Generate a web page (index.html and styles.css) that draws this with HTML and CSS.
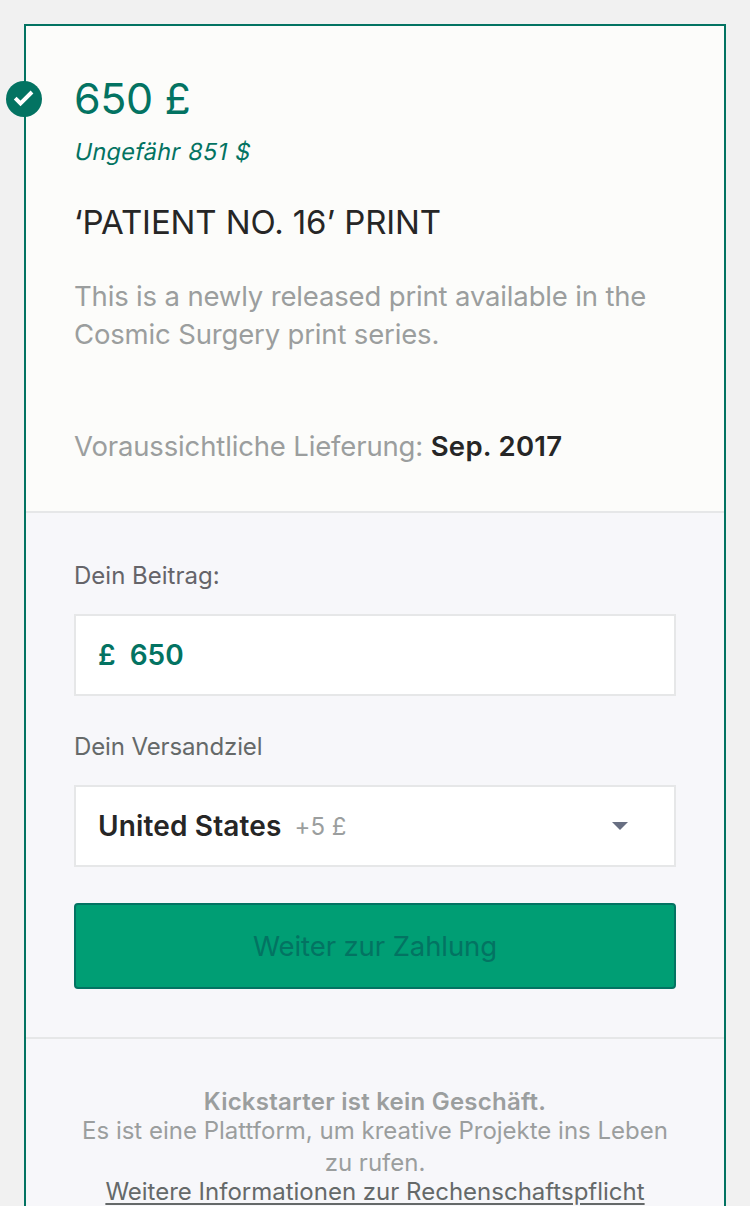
FILE: index.html
```html
<!DOCTYPE html>
<html lang="de">
<head>
<meta charset="utf-8">
<title>Kickstarter</title>
<link rel="stylesheet" href="styles.css">
</head>
<body>
<main class="card">
  <section class="reward">
    <svg class="check" viewBox="0 0 36 36"><circle cx="18" cy="18" r="18" fill="#037362"/><path d="M9.200 17.200l5.300 5.300L26 11" fill="none" stroke="#fff" stroke-width="3.900"/></svg>
    <h1 class="amount">650 £</h1>
    <p class="approx"><span class="slanted">Ungefähr 851 $</span></p>
    <h2 class="title">‘PATIENT NO. 16’ PRINT</h2>
    <p class="description">This is a newly released print available in the<br>Cosmic Surgery print series.</p>
    <p class="delivery">Voraussichtliche Lieferung: <strong class="date">Sep. 2017</strong></p>
  </section>
  <form class="pledge">
    <label class="label contribution">Dein Beitrag:</label>
    <div class="field money"><span>£</span><span>650</span></div>
    <label class="label destination">Dein Versandziel</label>
    <div class="field select"><span class="country">United States</span><span class="fee">+5 £</span><svg class="caret" viewBox="0 0 16 8"><path d="M0 0h16L8 8z" fill="#686f82"/></svg></div>
    <button class="submit" type="button">Weiter zur Zahlung</button>
  </form>
  <footer class="note">
    <strong class="headline">Kickstarter ist kein Geschäft.</strong>
    <span class="explanation">Es ist eine Plattform, um kreative Projekte ins Leben<br>zu rufen.</span>
    <a class="more">Weitere Informationen zur Rechenschaftspflicht</a>
  </footer>
</main>
</body>
</html>
```
FILE: styles.css
```css
* { box-sizing: border-box; }
body { margin: 0; padding: 24px 24px 0; height: 1206px; overflow: hidden; background: #f1f1f1; font-family: Inter, "Liberation Sans", sans-serif; font-variant-ligatures: none; }
h1, h2, p { margin: 0; font-weight: 400; }
strong { font-weight: 600; }
.card { height: 1230px; border: 2px solid #037362; background: #f7f7fa; }
.reward { position: relative; height: 487px; padding: 46px 48px 0; background: #fcfcfa; border-bottom: 2px solid #e6e7e8; }
.check { position: absolute; left: -20px; top: 55px; width: 36px; height: 36px; }
.amount { height: 54px; line-height: 52px; font-size: 43px; letter-spacing: -0.4px; color: #037362; }
.approx { height: 51px; line-height: 52px; font-size: 23.500px; color: #037362; }
.slanted { display: inline-block; margin-left: 1px; transform: skewX(-11deg); letter-spacing: 0.25px; word-spacing: 1px; white-space: nowrap; }
.title { height: 90px; line-height: 90px; font-size: 33px; color: #262626; white-space: nowrap; letter-spacing: -0.1px; }
.description { margin-top: 10px; line-height: 38px; font-size: 27.500px; letter-spacing: -0.16px; color: #9b9e9e; white-space: nowrap; }
.delivery { margin-top: 74px; line-height: 38px; font-size: 27.500px; letter-spacing: -0.15px; color: #9b9e9e; white-space: nowrap; }
.date { color: #262626; letter-spacing: 0.28px; }
.pledge { height: 526px; padding: 48px 48px 0; border-bottom: 2px solid #e6e7e8; }
.label { display: block; height: 30px; line-height: 30px; font-size: 24px; color: #656969; }
.contribution { color: #656469; }
.destination { letter-spacing: -0.12px; }
.field { display: flex; align-items: center; width: 602px; height: 82px; margin: 23px 0 36px; padding: 0 22px; border: 2px solid #e6e7e8; background: #fff; font-size: 28px; font-weight: 600; }
.money { color: #037362; gap: 14px; }
.select { color: #262626; gap: 13px; }
.country { letter-spacing: 0.15px; }
.fee { font-size: 24px; font-weight: 400; color: #9b9e9e; }
.caret { width: 16px; height: 8px; margin-left: auto; margin-right: 24px; }
.submit { display: block; width: 602px; height: 86px; padding: 0; border: 2px solid #037362; border-radius: 4px; background: #009e74; color: #037362; font: 400 27.500px Inter, sans-serif; letter-spacing: -0.1px; }
.note { display: flex; flex-direction: column; align-items: center; padding-top: 48px; color: #9b9e9e; font-size: 24px; line-height: 30px; text-align: center; white-space: nowrap; }
.headline { letter-spacing: 0.24px; }
.explanation { margin: -2px 0; line-height: 32px; }
.more { color: #656969; text-decoration: underline; text-decoration-thickness: 2px; text-underline-offset: 3px; }
```
